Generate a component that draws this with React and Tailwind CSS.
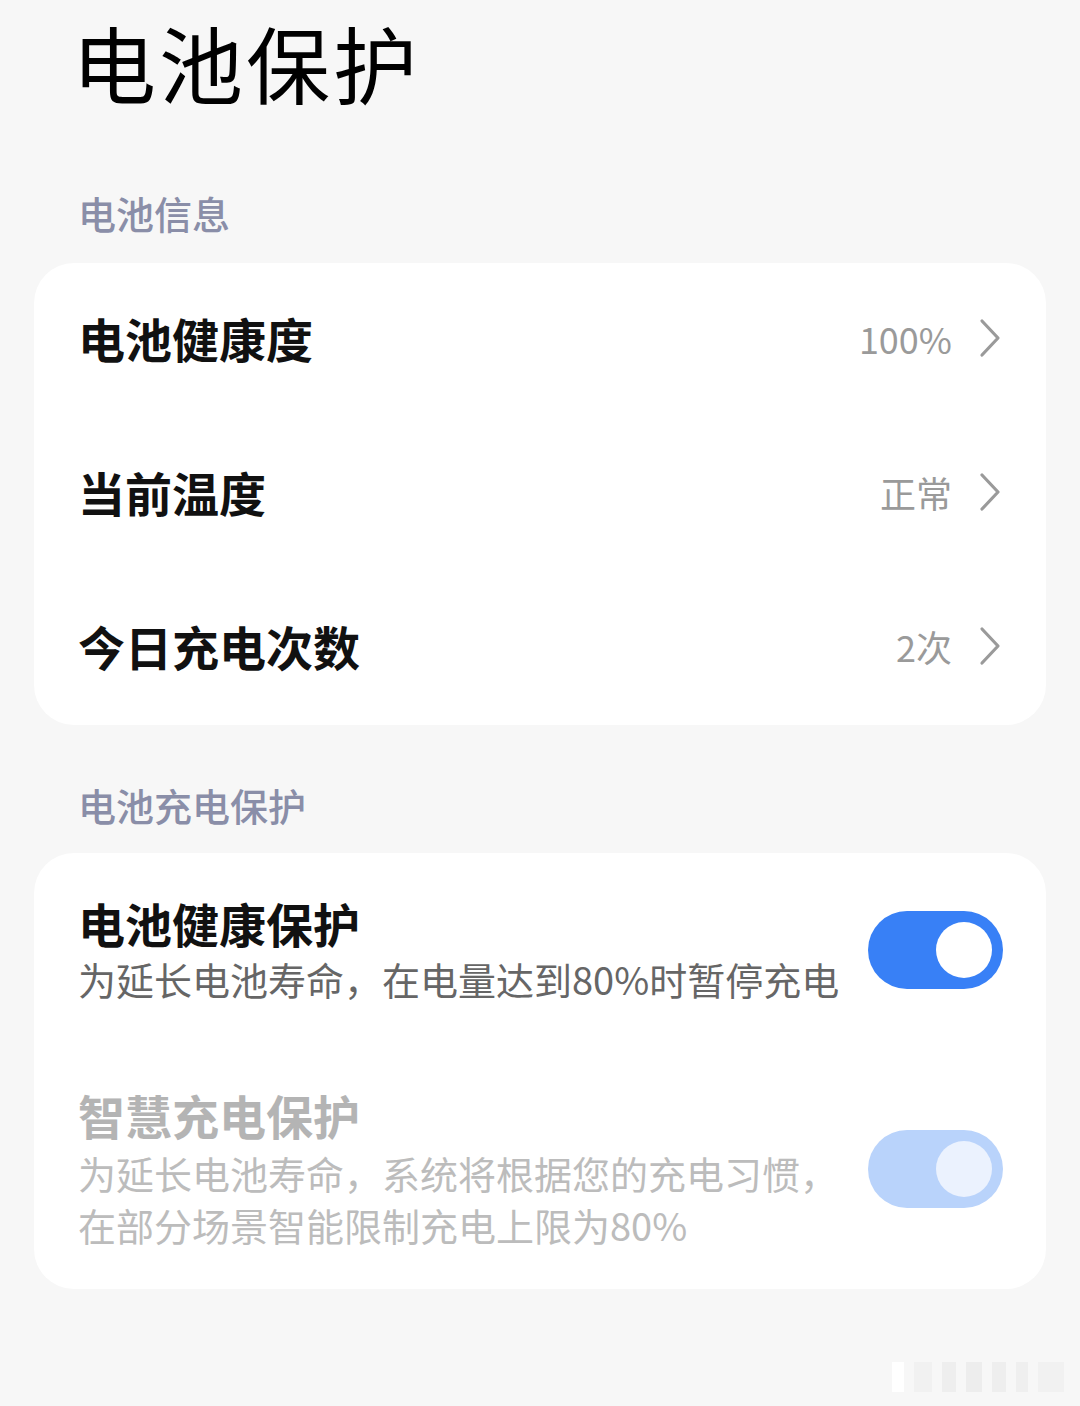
import React from 'react';

const font = { fontFamily: '"Noto Sans CJK SC", "Noto Sans", sans-serif' };

function Chevron() {
  return (
    <svg width="24" height="40" viewBox="0 0 24 40" fill="none" className="ml-[26px]">
      <path d="M4 3 L20 20 L4 37" stroke="#9a9a9a" strokeWidth="3.2" strokeLinecap="round" strokeLinejoin="round" />
    </svg>
  );
}

function InfoRow({ label, value }) {
  return (
    <div className="flex h-[154px] items-center justify-between pb-[4px] pl-[44px] pr-[44px]">
      <span className="text-[47px] font-bold leading-[56px] text-[#111]">{label}</span>
      <div className="flex items-center">
        <span className="text-[36px] leading-[44px] text-[#9a9a9a]">{value}</span>
        <Chevron />
      </div>
    </div>
  );
}

function Toggle({ disabled }) {
  return (
    <div
      className={
        'flex h-[78px] w-[135px] shrink-0 items-center justify-end rounded-full pr-[11px] ' +
        (disabled ? 'bg-[#b9d3fb]' : 'bg-[#3880f6]')
      }
    >
      <div className={'h-[56px] w-[56px] rounded-full ' + (disabled ? 'bg-[#ebf2fe]' : 'bg-white')} />
    </div>
  );
}

export default function App() {
  return (
    <div className="flex min-h-[1406px] w-[1080px] flex-col bg-[#f7f7f7]" style={font}>
      <h1 className="pl-[72px] text-[84px] font-normal leading-[124px] tracking-[3px] text-black">电池保护</h1>

      <div className="mt-[65px] pl-[78px] text-[38px] font-medium leading-[48px] text-[#8a8ea8]">电池信息</div>
      <div className="mx-[34px] mt-[26px] rounded-[40px] bg-white">
        <InfoRow label="电池健康度" value="100%" />
        <InfoRow label="当前温度" value="正常" />
        <InfoRow label="今日充电次数" value="2次" />
      </div>

      <div className="mt-[56px] pl-[78px] text-[38px] font-medium leading-[48px] text-[#8a8ea8]">电池充电保护</div>
      <div className="mx-[34px] mt-[24px] rounded-[40px] bg-white pb-[38px] pl-[44px] pr-[43px] pt-[42px]">
        <div className="flex items-center justify-between">
          <div>
            <div className="text-[47px] font-bold leading-[56px] text-[#111]">电池健康保护</div>
            <div className="mt-[2px] text-[38px] leading-[52px] text-[#666]">为延长电池寿命，在电量达到80%时暂停充电</div>
          </div>
          <Toggle />
        </div>
        <div className="mt-[82px] flex items-center justify-between">
          <div>
            <div className="text-[47px] font-bold leading-[56px] text-[#b4b4b4]">智慧充电保护</div>
            <div className="mt-[4px] text-[38px] leading-[52px] text-[#bcbcbc]">
              为延长电池寿命，系统将根据您的充电习惯，
              <br />
              在部分场景智能限制充电上限为80%
            </div>
          </div>
          <Toggle disabled />
        </div>
      </div>

      <div className="mt-auto flex justify-end gap-[10px] pb-[14px] pr-[16px]">
        <div className="h-[30px] w-[12px] bg-white" />
        <div className="h-[30px] w-[18px] bg-[#f1f1f1]" />
        <div className="h-[30px] w-[14px] bg-[#eeeeee]" />
        <div className="h-[30px] w-[16px] bg-[#ededed]" />
        <div className="h-[30px] w-[14px] bg-[#eeeeee]" />
        <div className="h-[30px] w-[12px] bg-[#efefef]" />
        <div className="h-[30px] w-[26px] bg-[#f1f1f1]" />
      </div>
    </div>
  );
}
